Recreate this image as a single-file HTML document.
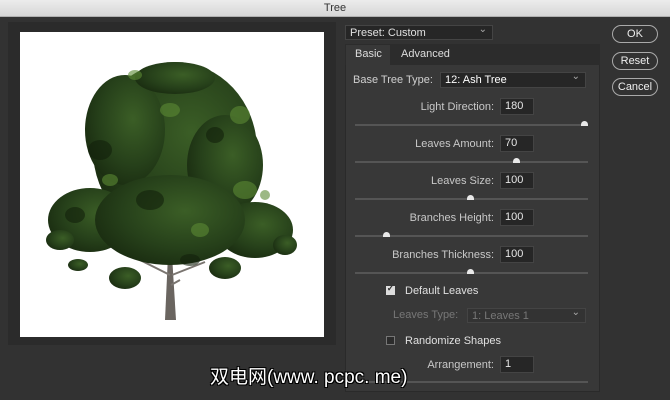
<!DOCTYPE html>
<html><head><meta charset="utf-8"><style>
*{margin:0;padding:0;box-sizing:border-box}
body{width:670px;height:400px;overflow:hidden;background:#323232;font-family:"Liberation Sans",sans-serif;font-size:11px;color:#d0d0d0;position:relative}
.a{position:absolute}
.title{left:0;top:0;width:670px;height:17px;background:linear-gradient(#ececec,#d6d6d6);border-bottom:1px solid #b0b0b0;text-align:center;color:#333;font-size:11px;line-height:17px}
.frame{left:8px;top:22px;width:328px;height:323px;background:#2b2b2b}
.white{left:20px;top:32px;width:304px;height:305px;background:#fff}
.sel{background:#262626;border:1px solid #444;color:#e0e0e0;padding-left:4px;line-height:14px}
.sel:after{content:"⌄";position:absolute;right:5px;top:-3px;font-size:10px;color:#aaa}
.panel{left:345px;top:44px;width:255px;height:348px;background:#383838;border:1px solid #2a2a2a}
.tabs{left:345px;top:44px;width:255px;height:21px;background:#2c2c2c}
.tab{top:44px;height:21px;line-height:21px;font-size:11px;color:#ddd}
.lbl{text-align:right;width:150px;left:344px;font-size:11px;color:#c8c8c8}
.inp{left:500px;width:34px;height:17px;background:#262626;border:1px solid #444;color:#e6e6e6;padding-left:4px;line-height:15px;font-size:11px}
.track{left:355px;width:233px;height:2px;background:#555}
.knob{width:7px;height:5px;background:#e8e8e8;border-radius:4px 4px 0 0}
.btn{left:612px;width:46px;height:18px;border:1px solid #aaa;border-radius:9px;text-align:center;color:#eee;line-height:16px;font-size:11px}
.cb{width:9px;height:9px;border:1px solid #777;background:#2c2c2c}
.wm{left:210px;top:362px;font-family:"Liberation Sans","Noto Sans CJK SC",sans-serif;font-size:19px;color:#fff;text-shadow:1px 1px 0 #000,-1px -1px 0 #000,1px -1px 0 #000,-1px 1px 0 #000}
</style></head><body>
<div class="a title">Tree</div>
<div class="a frame"></div>
<div class="a white"></div>
<svg class="a" style="left:0;top:0" width="340" height="345">
<defs><radialGradient id="g" cx="0.6" cy="0.4" r="0.7"><stop offset="0" stop-color="#3b5e26"/><stop offset="0.6" stop-color="#26401a"/><stop offset="1" stop-color="#18290f"/></radialGradient></defs>
<path d="M168 255 L165 320 L176 320 L172 255 Z" fill="#6a6560"/>
<path d="M170 275 L140 260 M172 275 L205 262 M171 285 L180 280" stroke="#7a7570" stroke-width="2"/>
<g fill="url(#g)">
<ellipse cx="175" cy="150" rx="82" ry="88"/>
<ellipse cx="125" cy="130" rx="40" ry="55"/>
<ellipse cx="225" cy="165" rx="38" ry="50"/>
<ellipse cx="90" cy="220" rx="42" ry="32"/>
<ellipse cx="255" cy="230" rx="38" ry="28"/>
<ellipse cx="170" cy="220" rx="75" ry="45"/>
<ellipse cx="125" cy="278" rx="16" ry="11"/>
<ellipse cx="225" cy="268" rx="16" ry="11"/>
<ellipse cx="78" cy="265" rx="10" ry="6"/>
<ellipse cx="175" cy="78" rx="40" ry="16"/>
<ellipse cx="60" cy="240" rx="14" ry="10"/>
<ellipse cx="285" cy="245" rx="12" ry="10"/>
</g>
<g fill="#5c8a34" opacity=".6"><ellipse cx="240" cy="115" rx="10" ry="9"/><ellipse cx="245" cy="190" rx="12" ry="9"/><ellipse cx="135" cy="75" rx="7" ry="5"/><ellipse cx="265" cy="195" rx="5" ry="5"/><ellipse cx="110" cy="180" rx="8" ry="6"/><ellipse cx="200" cy="230" rx="9" ry="7"/><ellipse cx="170" cy="110" rx="10" ry="7"/></g>
<g fill="#12200b" opacity=".6"><ellipse cx="100" cy="150" rx="12" ry="10"/><ellipse cx="150" cy="200" rx="14" ry="10"/><ellipse cx="215" cy="135" rx="9" ry="8"/><ellipse cx="75" cy="215" rx="10" ry="8"/><ellipse cx="190" cy="260" rx="10" ry="6"/></g>
</svg>
<div class="a sel" style="left:345px;top:25px;width:148px;height:15px">Preset: Custom</div>
<div class="a panel"></div>
<div class="a tabs"></div>
<div class="a" style="left:346px;top:45px;width:44px;height:20px;background:#383838"></div>
<div class="a tab" style="left:355px">Basic</div>
<div class="a tab" style="left:401px">Advanced</div>
<div class="a" style="left:353px;top:74px">Base Tree Type:</div>
<div class="a sel" style="left:440px;top:72px;width:146px;height:16px;color:#fff">12: Ash Tree</div>

<div class="a lbl" style="top:101px">Light Direction:</div><div class="a inp" style="top:98px">180</div>
<div class="a track" style="top:124px"></div><div class="a knob" style="left:581px;top:121px"></div>
<div class="a lbl" style="top:138px">Leaves Amount:</div><div class="a inp" style="top:135px">70</div>
<div class="a track" style="top:161px"></div><div class="a knob" style="left:513px;top:158px"></div>
<div class="a lbl" style="top:175px">Leaves Size:</div><div class="a inp" style="top:172px">100</div>
<div class="a track" style="top:198px"></div><div class="a knob" style="left:467px;top:195px"></div>
<div class="a lbl" style="top:212px">Branches Height:</div><div class="a inp" style="top:209px">100</div>
<div class="a track" style="top:235px"></div><div class="a knob" style="left:383px;top:232px"></div>
<div class="a lbl" style="top:249px">Branches Thickness:</div><div class="a inp" style="top:246px">100</div>
<div class="a track" style="top:272px"></div><div class="a knob" style="left:467px;top:269px"></div>

<div class="a cb" style="left:386px;top:286px;background:#ddd;border-color:#ddd"></div>
<div class="a" style="left:386px;top:283px;width:9px;color:#333;font-size:9px;font-weight:bold;text-align:center">✓</div>
<div class="a" style="left:405px;top:285px;color:#e0e0e0">Default Leaves</div>
<div class="a" style="left:393px;top:309px;color:#777">Leaves Type:</div>
<div class="a sel" style="left:467px;top:308px;width:119px;height:15px;color:#777;background:#333">1: Leaves 1</div>
<div class="a cb" style="left:386px;top:336px"></div>
<div class="a" style="left:405px;top:335px;color:#e0e0e0">Randomize Shapes</div>
<div class="a lbl" style="top:359px">Arrangement:</div><div class="a inp" style="top:356px">1</div>
<div class="a track" style="top:381px"></div>

<div class="a btn" style="top:25px">OK</div>
<div class="a btn" style="top:52px">Reset</div>
<div class="a btn" style="top:78px">Cancel</div>
<div class="a wm">双电网(www. pcpc. me)</div>
</body></html>
